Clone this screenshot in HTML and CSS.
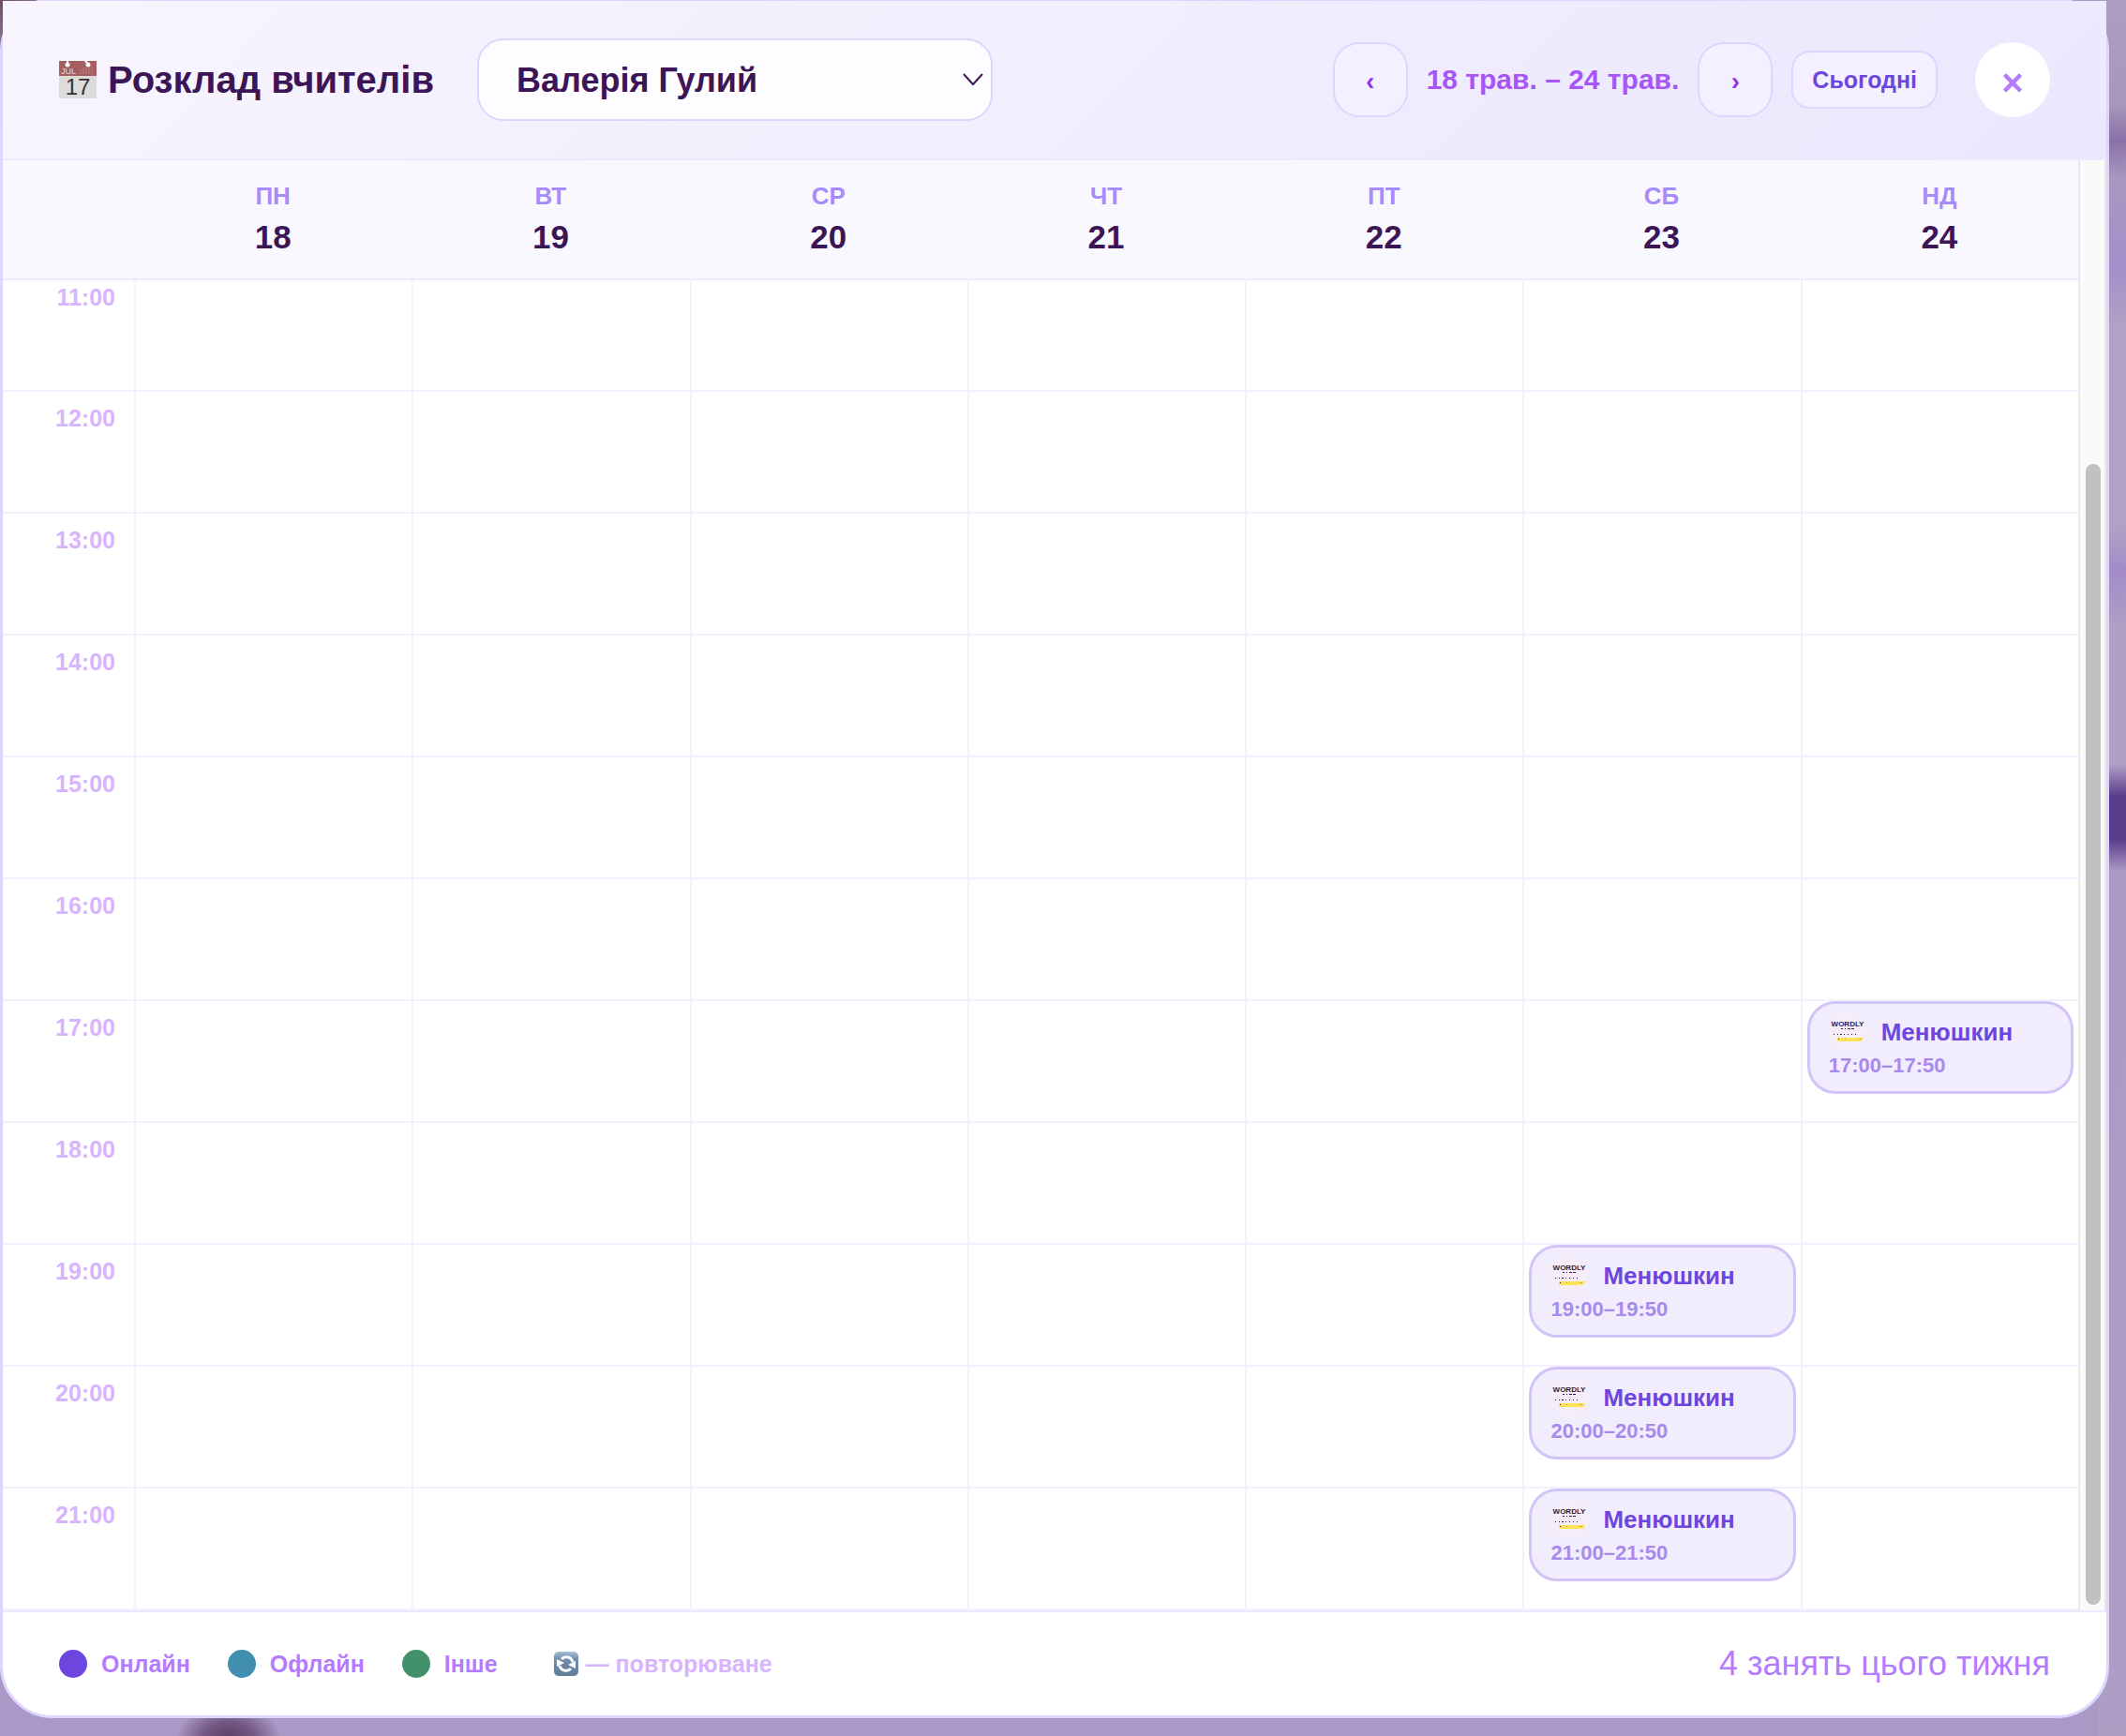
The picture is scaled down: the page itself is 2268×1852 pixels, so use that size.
FILE: index.html
```html
<!doctype html>
<html lang="uk">
  <head>
    <meta charset="UTF-8">
    <meta name="viewport" content="width=device-width, initial-scale=1">
    <title>Розклад вчителів</title>
    <link rel="stylesheet" href="styles.css">
  </head>
  <body>
    <main class="modal">
      <header class="modal-header">
        <h1>
          <svg class="calendar-icon" viewBox="0 0 40 40" aria-hidden="true">
            <rect width="40" height="40" fill="#dcdcdc"/>
            <rect width="40" height="16" fill="#a65f60"/>
            <path d="M9 0v3M28 0l3 3" stroke="#fff" stroke-width="2"/>
            <circle cx="9" cy="4" r="2.500" fill="#fff"/>
            <circle cx="31" cy="4" r="2.500" fill="#fff"/>
            <path d="M23 9v5M26 8v6M29 7v7M32 7v7M35 6v8" stroke="#b98384"/>
            <text x="2" y="14" font-family="Liberation Sans" font-size="9" font-weight="400" fill="#ecd9d9">JUL</text>
            <text x="20" y="36" text-anchor="middle" font-family="Liberation Sans" font-size="24" font-weight="400" fill="#333">17</text>
          </svg>
          Розклад вчителів
        </h1>
        <div class="select-wrap">
          <select id="teacher" aria-label="Вчитель">
            <option>Валерія Гулий</option>
          </select>
          <svg viewBox="0 0 22 14" aria-hidden="true"><path d="M1 1l10 11L21 1" fill="none" stroke="#3b1556" stroke-width="2"/></svg>
        </div>
        <nav class="week-nav">
          <button class="arrow" type="button" aria-label="Попередній тиждень">‹</button>
          <span class="week">18 трав. – 24 трав.</span>
          <button class="arrow" type="button" aria-label="Наступний тиждень">›</button>
          <button class="today" type="button">Сьогодні</button>
        </nav>
        <button class="close" type="button" aria-label="Закрити">×</button>
      </header>

      <div class="schedule">
        <table>
          <thead>
            <tr>
              <td class="corner"></td>
              <th scope="col">ПН<b>18</b></th>
              <th scope="col">ВТ<b>19</b></th>
              <th scope="col">СР<b>20</b></th>
              <th scope="col">ЧТ<b>21</b></th>
              <th scope="col">ПТ<b>22</b></th>
              <th scope="col">СБ<b>23</b></th>
              <th scope="col">НД<b>24</b></th>
            </tr>
          </thead>
          <tbody>
            <tr class="cut"><th scope="row">11:00</th><td></td><td></td><td></td><td></td><td></td><td></td><td></td></tr>
            <tr><th scope="row">12:00</th><td></td><td></td><td></td><td></td><td></td><td></td><td></td></tr>
            <tr><th scope="row">13:00</th><td></td><td></td><td></td><td></td><td></td><td></td><td></td></tr>
            <tr><th scope="row">14:00</th><td></td><td></td><td></td><td></td><td></td><td></td><td></td></tr>
            <tr><th scope="row">15:00</th><td></td><td></td><td></td><td></td><td></td><td></td><td></td></tr>
            <tr><th scope="row">16:00</th><td></td><td></td><td></td><td></td><td></td><td></td><td></td></tr>
            <tr>
              <th scope="row">17:00</th><td></td><td></td><td></td><td></td><td></td><td></td>
              <td>
                <div class="lesson">
                  <div class="name">
                    <svg viewBox="0 0 40 40" aria-hidden="true">
                      <g id="wordly">
                        <circle cx="20" cy="20" r="20" fill="#fbeef6" opacity="0.5"/>
                        <text x="20" y="14" text-anchor="middle" font-family="Liberation Sans" font-size="8" font-weight="700" fill="#2d1b4e">WORDLY</text>
                        <path d="M13 16.500h2M17 16.500h1M20 16.500h3M24 16.500h3" stroke="#2d1b4e"/>
                        <path d="M5 22.500h1M9 22.500h1M12 22.500h2M16 22.500h1M20 22.500h1M24 22.500h1M28 22.500h1" stroke="#2d1b4e"/>
                        <path d="M9 26h28l-2 4H9z" fill="#fde35a"/>
                        <path d="M10 27.500h1" stroke="#2d1b4e"/>
                        <path d="M17 27.500h1M31 27.500h1M33 27.500h1" stroke="#b59a3c"/>
                      </g>
                    </svg>
                    Менюшкин
                  </div>
                  <div class="time">17:00–17:50</div>
                </div>
              </td>
            </tr>
            <tr><th scope="row">18:00</th><td></td><td></td><td></td><td></td><td></td><td></td><td></td></tr>
            <tr>
              <th scope="row">19:00</th><td></td><td></td><td></td><td></td><td></td>
              <td>
                <div class="lesson">
                  <div class="name"><svg viewBox="0 0 40 40" aria-hidden="true"><use href="#wordly"/></svg>Менюшкин</div>
                  <div class="time">19:00–19:50</div>
                </div>
              </td>
              <td></td>
            </tr>
            <tr>
              <th scope="row">20:00</th><td></td><td></td><td></td><td></td><td></td>
              <td>
                <div class="lesson">
                  <div class="name"><svg viewBox="0 0 40 40" aria-hidden="true"><use href="#wordly"/></svg>Менюшкин</div>
                  <div class="time">20:00–20:50</div>
                </div>
              </td>
              <td></td>
            </tr>
            <tr>
              <th scope="row">21:00</th><td></td><td></td><td></td><td></td><td></td>
              <td>
                <div class="lesson">
                  <div class="name"><svg viewBox="0 0 40 40" aria-hidden="true"><use href="#wordly"/></svg>Менюшкин</div>
                  <div class="time">21:00–21:50</div>
                </div>
              </td>
              <td></td>
            </tr>
          </tbody>
        </table>
        <div class="scrollbar"><div class="thumb"></div></div>
      </div>

      <footer class="modal-footer">
        <ul class="legend">
          <li><i class="dot online"></i>Онлайн</li>
          <li><i class="dot offline"></i>Офлайн</li>
          <li><i class="dot other"></i>Інше</li>
        </ul>
        <div class="repeat">
          <svg viewBox="0 0 26 26" aria-hidden="true">
            <defs>
              <linearGradient id="repeat-bg" x1="0" y1="0" x2="0" y2="1">
                <stop offset="0" stop-color="#a9bfd4"/>
                <stop offset="0.3" stop-color="#6f8fae"/>
                <stop offset="1" stop-color="#5f7b97"/>
              </linearGradient>
            </defs>
            <rect width="26" height="26" rx="5" fill="url(#repeat-bg)"/>
            <path d="M8 8a7 7 0 0 1 12 3M18 18a7 7 0 0 1-12-3" fill="none" stroke="#fff" stroke-width="3"/>
            <path d="M15 14l8-4v8zM11 12l-8 4V8z" fill="#fff"/>
          </svg>
          — повторюване
        </div>
        <div class="total">4 занять цього тижня</div>
      </footer>
    </main>
  </body>
</html>
```
FILE: styles.css
```css
* {
    box-sizing: border-box;
}

body {
    margin: 0;
    min-height: 100vh;
    overflow: hidden;
    font-family: "Liberation Sans", Arial, sans-serif;
    /* blurred page behind the modal */
    background:
        radial-gradient(ellipse 56px 40px at 244px 1856px, #553c66 0, #755a86 50%, transparent 100%),
        radial-gradient(circle at 0 0, #6d4f66 0, #8f7c9c 60px, transparent 100px),
        linear-gradient(to left, transparent 30px, #aa98c6 30px),
        linear-gradient(#ae9cc2 0, #a898bc 110px, #8a71a8 150px, #a898c0 190px, #a48fca 285px, #b0a2c4 350px, #b0a2c4 560px, #a28bc8 610px, #b0a0c5 670px, #b0a0c5 815px, #5b3b8b 850px, #5b3b8b 895px, #ab9ac5 930px, #ae9dc5 100%);
}

button, select {
    font-family: inherit;
    font-weight: 700;
    cursor: pointer;
}

.modal {
    margin: -2px 18px 0 0;
    border: 3px solid #ddd6fe;
    border-radius: 56px;
    background: #fff;
}

.modal-header {
    display: flex;
    align-items: center;
    height: 170px;
    padding: 0 60px;
    border-bottom: 2px solid #ede9fe;
    background: linear-gradient(135deg, #f8f5ff, #ebe7fd);
}

h1 {
    display: flex;
    align-items: center;
    gap: 12px;
    margin: 0 46px 0 0;
    font-size: 40px;
    line-height: 48px;
    color: #3b1556;
    white-space: nowrap;
}

.calendar-icon {
    width: 40px;
    height: 40px;
}

.select-wrap {
    position: relative;
    width: 550px;
}

.select-wrap select {
    display: block;
    width: 100%;
    height: 88px;
    padding: 0 40px;
    appearance: none;
    border: 2px solid #ddd6fe;
    border-radius: 28px;
    background: #fdfcff;
    font-size: 36px;
    color: #3b1556;
}

.select-wrap svg {
    position: absolute;
    right: 10px;
    top: 37px;
    width: 22px;
    height: 14px;
    pointer-events: none;
}

.week-nav {
    display: flex;
    align-items: center;
    gap: 20px;
    margin: 0 40px 0 auto;
}

.week {
    font-size: 30px;
    font-weight: 700;
    color: #a855f7;
    white-space: nowrap;
}

.arrow, .today {
    border: 2px solid #ddd6fe;
    background: #f5f0ff;
}

.arrow {
    width: 80px;
    height: 80px;
    padding: 4px 0 0;
    border-radius: 28px;
    font-size: 28px;
    color: #9333ea;
}

.today {
    height: 62px;
    padding: 0 20px;
    border-radius: 20px;
    font-size: 25px;
    color: #6d46e0;
}

.close {
    width: 80px;
    height: 80px;
    padding: 6px 0 0;
    border: 0;
    border-radius: 50%;
    background: #fff;
    font-size: 40px;
    color: #b57bff;
}

.schedule {
    display: flex;
}

table {
    flex: 1;
    width: 100%;
    table-layout: fixed;
    border-spacing: 0;
}

td, th {
    padding: 0;
    vertical-align: top;
}

thead td, thead th {
    height: 128px;
    border-bottom: 2px solid #ede9fe;
    background: #faf8ff;
}

.corner {
    width: 140px;
}

thead th {
    padding-top: 22px;
    font-size: 26px;
    line-height: 32px;
    color: #a78bfa;
}

thead b {
    display: block;
    margin-top: 8px;
    font-size: 35px;
    line-height: 40px;
    color: #3b1556;
}

tbody td, tbody th {
    height: 130px;
    border-bottom: 2px solid #f3f0ff;
}

tbody td {
    padding: 0 5px;
    border-left: 2px solid #f3f0ff;
}

tbody th {
    padding: 14px 20px 0 0;
    font-size: 25px;
    line-height: 28px;
    text-align: right;
    color: #d8b4fe;
}

/* the first hour is partly scrolled under the day names */
.cut td, .cut th {
    height: 119px;
}

.cut th {
    padding-top: 4px;
}

.lesson {
    height: 99px;
    padding: 10px 20px;
    border: 3px solid #d3c4f7;
    border-radius: 30px;
    background: #f2edfc;
}

.name {
    display: flex;
    align-items: center;
    gap: 16px;
    height: 40px;
    font-size: 26px;
    font-weight: 700;
    color: #6d46e0;
}

.name svg {
    width: 40px;
    height: 40px;
}

.time {
    font-size: 22px;
    font-weight: 700;
    line-height: 32px;
    color: #a78bec;
}

.scrollbar {
    flex: none;
    width: 30px;
    padding: 324px 4px 6px 6px;
    border: solid #e8e8e8;
    border-width: 0 2px;
    background: #fafafa;
}

.thumb {
    width: 16px;
    height: 100%;
    border-radius: 8px;
    background: #c1c1c1;
}

.modal-footer {
    display: flex;
    align-items: center;
    height: 112px;
    padding: 0 60px;
    border-top: 2px solid #ede9fe;
    font-size: 25px;
    font-weight: 700;
}

.legend {
    display: flex;
    gap: 40px;
    margin: 0 60px 0 0;
    padding: 0;
    list-style: none;
    color: #b57bff;
}

.legend li, .repeat {
    display: flex;
    align-items: center;
}

.legend li {
    gap: 15px;
}

.dot {
    width: 30px;
    height: 30px;
    border-radius: 50%;
}

.online {
    background: #6d46e0;
}

.offline {
    background: #428eae;
}

.other {
    background: #43916b;
}

.repeat {
    gap: 8px;
    color: #d8b4fe;
}

.repeat svg {
    width: 26px;
    height: 26px;
}

.total {
    margin-left: auto;
    font-size: 36px;
    font-weight: 400;
    color: #b57bff;
}
```
